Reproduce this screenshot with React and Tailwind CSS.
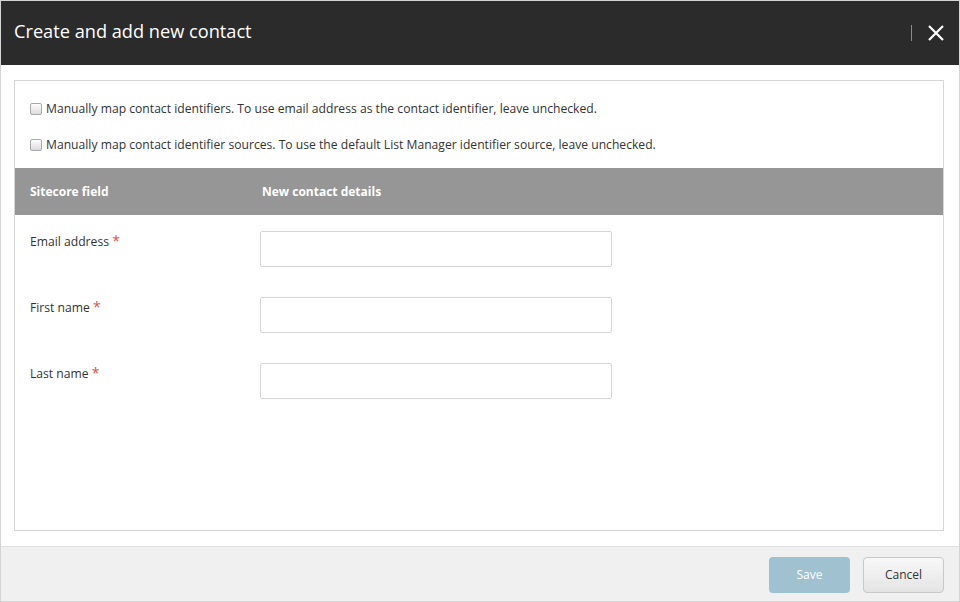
import React from "react";

function Check() {
  return (
    <span className="inline-block w-[12px] h-[12px] rounded-[2px] border border-[#a8a8a8] bg-gradient-to-b from-[#fdfdfd] to-[#dcdcdc] shrink-0" />
  );
}

function Row({ label }) {
  return (
    <div className="flex h-[66px] pt-[16px]">
      <div className="w-[245px] pl-[15px] text-[12.15px] text-[#333] leading-[18px] pt-[1px]">
        {label} <span className="text-[#d9534f] text-[14px]">*</span>
      </div>
      <div className="w-[352px] h-[36px] border border-[#d6d6d6] rounded-[2px] bg-white" />
    </div>
  );
}

export default function App() {
  return (
    <div
      className="w-[960px] h-[602px] flex flex-col bg-white border border-[#d4d4d4] overflow-hidden"
      style={{ fontFamily: '"Open Sans", "Noto Sans", sans-serif' }}
    >
      <div className="h-[64px] bg-[#2b2b2b] flex items-center pl-[13px] pr-[14px] shrink-0">
        <div className="text-white text-[18.2px] flex-1 leading-[24px] pb-[4px]">Create and add new contact</div>
        <div className="w-[1px] h-[16px] bg-[#8a8a8a] mr-[15px]" />
        <svg width="18" height="18" viewBox="0 0 18 18" className="text-white">
          <path d="M2 2 L16 16 M16 2 L2 16" stroke="currentColor" strokeWidth="2.2" strokeLinecap="butt" />
        </svg>
      </div>
      <div className="flex-1 pt-[15px] pl-[13px] pr-[15px] pb-[15px] flex">
        <div className="flex-1 border border-[#d6d6d6] flex flex-col">
          <div className="pl-[15px] pt-[18px] text-[12.15px] text-[#333]">
            <div className="flex items-center gap-[4px] h-[20px]">
              <Check />
              <span>Manually map contact identifiers. To use email address as the contact identifier, leave unchecked.</span>
            </div>
            <div className="flex items-center gap-[4px] h-[20px] mt-[16px]">
              <Check />
              <span>Manually map contact identifier sources. To use the default List Manager identifier source, leave unchecked.</span>
            </div>
          </div>
          <div className="mt-[13px] h-[47px] bg-[#969696] flex items-center text-white text-[12px] font-bold">
            <div className="w-[247px] pl-[15px]">Sitecore field</div>
            <div>New contact details</div>
          </div>
          <Row label="Email address" />
          <Row label="First name" />
          <Row label="Last name" />
        </div>
      </div>
      <div className="h-[55px] bg-[#f0f0f0] border-t border-[#e0e0e0] flex items-center justify-end gap-[13px] pr-[15px] pt-[2px] shrink-0">
        <button className="w-[81px] h-[36px] rounded-[4px] bg-[#9fc1d0] text-white text-[12px]">Save</button>
        <button className="w-[81px] h-[36px] rounded-[4px] border border-[#c8c8c8] bg-gradient-to-b from-[#f8f8f8] to-[#e4e4e4] text-[#333] text-[12px]">Cancel</button>
      </div>
    </div>
  );
}
